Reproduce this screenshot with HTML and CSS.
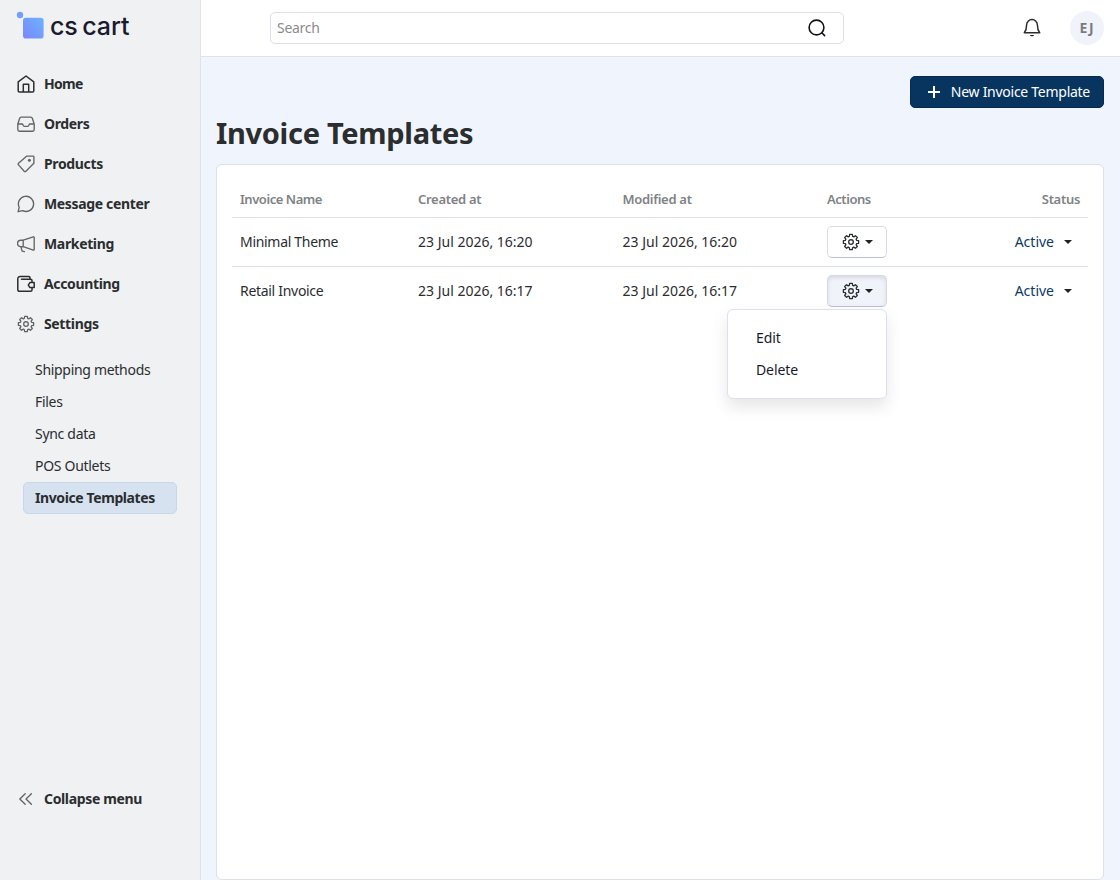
FILE: index.html
```html
<!DOCTYPE html>
<html lang="en">
<head>
    <meta charset="UTF-8">
    <meta name="viewport" content="width=device-width, initial-scale=1.0">
    <title>Invoice Templates</title>
    <link rel="stylesheet" href="styles.css">
</head>
<body>
    <svg class="sprite" width="0" height="0">
        <symbol id="gear" viewBox="-9 -9 18 18">
            <path d="M-1.3-7.6H1.3L1.7-5.6 2.76-5.16 4.45-6.29 6.29-4.45 5.16-2.76 5.6-1.7 7.6-1.3V1.3L5.6 1.7 5.16 2.76 6.29 4.45 4.45 6.29 2.76 5.16 1.7 5.6 1.3 7.6H-1.3L-1.7 5.6-2.76 5.16-4.45 6.29-6.29 4.45-5.16 2.76-5.6 1.7-7.6 1.3V-1.3L-5.6-1.7-5.16-2.76-6.29-4.45-4.45-6.29-2.76-5.16-1.7-5.6Z"/>
            <circle r="2.3"/>
        </symbol>
    </svg>

    <aside class="sidebar">
        <a class="logo" href="#">
            <svg width="28" height="28" viewBox="0 0 28 28">
                <defs>
                    <linearGradient id="logo-fill" x1="1" y1="0" x2="0" y2="1">
                        <stop offset="0" stop-color="#6cb3ff"/>
                        <stop offset="1" stop-color="#7a86fb"/>
                    </linearGradient>
                </defs>
                <circle cx="4" cy="4" r="3.2" fill="#74a0fb"/>
                <rect x="7" y="6.8" width="20.6" height="20.8" rx="2.8" fill="url(#logo-fill)"/>
            </svg>
            <span class="logo-text">cs cart</span>
        </a>
        <nav class="menu">
            <a class="menu-item home" href="#">
                <svg class="icon dark" viewBox="0 0 18 18"><path d="M1.2 6.9 9 1l7.8 5.9v8.8a1.3 1.3 0 0 1-1.3 1.3h-13a1.3 1.3 0 0 1-1.3-1.3ZM6.3 17V9.2h5.4V17"/></svg>
                <span>Home</span>
            </a>
            <a class="menu-item" href="#">
                <svg class="icon" viewBox="0 0 18 18"><path d="M.8 9 2.7 3.2a1.6 1.6 0 0 1 1.500-1.100h9.600a1.6 1.6 0 0 1 1.500 1.100L17.200 9v5.600a1.600 1.600 0 0 1-1.600 1.600H2.400a1.600 1.600 0 0 1-1.600-1.600ZM.8 9h4.400c.8 0 .9 2.400 2 2.400h3.600c1.100 0 1.200-2.400 2-2.400h4.400"/></svg>
                <span>Orders</span>
            </a>
            <a class="menu-item" href="#">
                <svg class="icon" viewBox="0 0 18 18"><path d="M9.8 1.1h6.300a.8.8 0 0 1 .8.8v6.300L8.900 16.200a1.200 1.200 0 0 1-1.700 0L1.500 9.900a1.200 1.200 0 0 1 0-1.600Z"/><circle class="dot" cx="12.4" cy="5.300" r="1.500"/></svg>
                <span>Products</span>
            </a>
            <a class="menu-item" href="#">
                <svg class="icon" viewBox="0 0 18 18"><path d="M1.1 16.700 2.200 12.300A7.600 7.600 0 1 1 5.600 15.700Z"/></svg>
                <span>Message center</span>
            </a>
            <a class="menu-item" href="#">
                <svg class="icon" viewBox="0 0 18 18"><path d="M6.2 5.200 16.300 1.800a.7.7 0 0 1 .9.7v12a.7.7 0 0 1-.9.7L6.200 11.700H3.800a3.250 3.250 0 0 1 0-6.500ZM6.200 5.200v6.500M3.900 11.800l1.200 4.300 2.300.5"/></svg>
                <span>Marketing</span>
            </a>
            <a class="menu-item" href="#">
                <svg class="icon dark" viewBox="0 0 18 18"><path d="M15 7.300V5.600a1.400 1.400 0 0 0-1.400-1.400H4.500M13 4.200V2.800a1.200 1.200 0 0 0-1.200-1.200H3A2.200 2.200 0 0 0 .8 3.800v11a1.500 1.500 0 0 0 1.500 1.500h11.300a1.400 1.400 0 0 0 1.400-1.400v-2.100M17.200 7.600h-4.300l-1.600 2.500 1.600 2.500h4.300Z"/></svg>
                <span>Accounting</span>
            </a>
            <a class="menu-item" href="#">
                <svg class="icon"><use href="#gear"/></svg>
                <span>Settings</span>
            </a>
        </nav>
        <nav class="submenu">
            <a href="#">Shipping methods</a>
            <a href="#">Files</a>
            <a href="#">Sync data</a>
            <a href="#">POS Outlets</a>
            <a href="#" class="active">Invoice Templates</a>
        </nav>
        <a class="menu-item collapse" href="#">
            <svg class="icon" viewBox="0 0 18 18"><path d="M8.200 3.700 2.800 9l5.400 5.300M14.400 3.700 9 9l5.400 5.300"/></svg>
            <span>Collapse menu</span>
        </a>
    </aside>

    <div class="main">
        <header class="topbar">
            <div class="search">
                <span>Search</span>
                <svg width="18" height="18" viewBox="0 0 18 18"><circle cx="8.500" cy="8.500" r="7.400"/><path d="m13.800 13.800 2.800 2.800"/></svg>
            </div>
            <div class="account">
                <svg class="bell" width="18" height="20" viewBox="0 0 18 20"><path d="M3.600 7a5.400 5.400 0 0 1 10.800 0c0 4.600 1 6.200 2.300 7.800H1.300C2.600 13.200 3.600 11.600 3.600 7Z"/><path class="clapper" d="M6.800 17h4.400c-.5 1.700-3.900 1.700-4.400 0Z"/></svg>
                <span class="avatar">EJ</span>
            </div>
        </header>

        <div class="content">
            <div class="actions-bar">
                <button class="btn-primary">
                    <svg width="12" height="12" viewBox="0 0 12 12"><path d="M6 0v12M0 6h12"/></svg>
                    <span>New Invoice Template</span>
                </button>
            </div>
            <h1>Invoice Templates</h1>
            <div class="card">
                <div class="row head">
                    <span>Invoice Name</span>
                    <span class="date">Created at</span>
                    <span class="date">Modified at</span>
                    <span>Actions</span>
                    <span class="status">Status</span>
                </div>
                <div class="row">
                    <span>Minimal Theme</span>
                    <span class="date">23 Jul 2026, 16:20</span>
                    <span class="date">23 Jul 2026, 16:20</span>
                    <div class="tools">
                        <button class="btn-tool"><svg class="icon"><use href="#gear"/></svg><i class="caret"></i></button>
                    </div>
                    <a class="status" href="#"><span>Active</span><i class="caret"></i></a>
                </div>
                <div class="row">
                    <span>Retail Invoice</span>
                    <span class="date">23 Jul 2026, 16:17</span>
                    <span class="date">23 Jul 2026, 16:17</span>
                    <div class="tools">
                        <button class="btn-tool open"><svg class="icon"><use href="#gear"/></svg><i class="caret"></i></button>
                        <div class="dropdown">
                            <a href="#">Edit</a>
                            <a href="#">Delete</a>
                        </div>
                    </div>
                    <a class="status" href="#"><span>Active</span><i class="caret"></i></a>
                </div>
            </div>
        </div>
    </div>
</body>
</html>
```
FILE: styles.css
```css
* {
    box-sizing: border-box;
}
body {
    margin: 0;
    height: 880px;
    display: flex;
    overflow: hidden;
    font-family: "Noto Sans", "Open Sans", sans-serif;
    font-size: 14px;
    line-height: 20px;
    letter-spacing: -0.3px;
    color: #2b2d2f;
    background-color: #f0f4fc;
}
a {
    color: inherit;
    text-decoration: none;
}
button {
    font: inherit;
    letter-spacing: inherit;
    cursor: pointer;
}
svg {
    fill: none;
    stroke: currentColor;
    flex-shrink: 0;
}
.sprite {
    position: absolute;
}
.sidebar {
    width: 201px;
    flex-shrink: 0;
    background-color: #eff1f3;
    border-right: 1px solid #dce3ea;
    display: flex;
    flex-direction: column;
}
.logo {
    height: 64px;
    padding: 11px 16px 0;
    display: flex;
    align-items: flex-start;
    gap: 6px;
}
.logo svg {
    stroke: none;
}
.logo-text {
    font-family: Inter, sans-serif;
    font-size: 25px;
    font-weight: 500;
    line-height: 30px;
    letter-spacing: -0.1px;
    word-spacing: -2px;
    color: #1a1a2e;
}
.menu-item {
    height: 40px;
    padding-left: 17px;
    display: flex;
    align-items: center;
    gap: 9px;
    font-weight: 700;
    letter-spacing: -0.35px;
}
.menu-item.home {
    letter-spacing: -0.7px;
}
.icon {
    width: 18px;
    height: 18px;
    stroke-width: 1.35;
    stroke-linejoin: round;
    stroke-linecap: round;
    color: #626467;
}
.icon.dark {
    color: #2b2d30;
    stroke-width: 1.5;
}
.icon .dot {
    fill: currentColor;
    stroke: none;
}
.submenu {
    padding: 10px 23px 0;
}
.submenu a {
    display: block;
    height: 32px;
    padding: 5px 11px;
    border: 1px solid transparent;
    border-radius: 5px;
}
.submenu .active {
    font-weight: 700;
    background-color: #d6e2f0;
    border-color: #c8d8ea;
    letter-spacing: -0.4px;
}
.collapse {
    margin-top: auto;
    margin-bottom: 61px;
}
.main {
    flex: 1;
    display: flex;
    flex-direction: column;
}
.topbar {
    height: 57px;
    flex-shrink: 0;
    padding: 0 16px 0 69px;
    background-color: #fff;
    border-bottom: 1px solid #dfe2ea;
    display: flex;
    align-items: center;
    justify-content: space-between;
}
.search {
    width: 574px;
    height: 32px;
    padding: 0 17px 0 6px;
    border: 1px solid #dcdfe9;
    border-radius: 5px;
    color: #8c8c8c;
    display: flex;
    align-items: center;
    justify-content: space-between;
}
.search svg {
    color: #111;
    stroke-width: 1.6;
    stroke-linecap: round;
}
.account {
    display: flex;
    align-items: center;
    gap: 29px;
}
.bell {
    stroke-width: 1.5;
    stroke-linejoin: round;
}
.bell .clapper {
    fill: currentColor;
    stroke: none;
}
.avatar {
    width: 34px;
    height: 34px;
    border-radius: 50%;
    background-color: #f1f3fa;
    color: #7b7b7e;
    font-size: 14px;
    font-weight: 700;
    letter-spacing: 0.8px;
    line-height: 34px;
    text-align: center;
}
.content {
    flex: 1;
    padding: 19px 16px 0 15px;
    display: flex;
    flex-direction: column;
}
.actions-bar {
    display: flex;
    justify-content: flex-end;
}
.btn-primary {
    width: 194px;
    height: 32px;
    padding: 0 13px 0 17px;
    border: 1px solid #042b54;
    border-radius: 5px;
    background-color: #08355f;
    color: #fff;
    letter-spacing: -0.27px;
    display: flex;
    align-items: center;
    justify-content: space-between;
    white-space: nowrap;
}
.btn-primary svg {
    stroke-width: 2;
}
h1 {
    margin: 5px 0 11px;
    font-size: 29px;
    line-height: 40px;
    font-weight: 700;
    letter-spacing: -0.3px;
}
.card {
    flex: 1;
    padding: 16px 15px;
    background-color: #fff;
    border: 1px solid #dce1e8;
    border-radius: 6px;
}
.row {
    height: 49px;
    display: grid;
    grid-template-columns: 178px 204.5px 204.5px 120px 1fr;
    align-items: center;
}
.row > * {
    padding: 0 8px;
}
.row + .row {
    border-top: 1px solid #dce1ea;
}
.row .date {
    letter-spacing: 0;
}
.row.head {
    height: 36px;
    font-size: 13px;
    font-weight: 600;
    letter-spacing: -0.45px;
    color: #808285;
}
.row.head .date {
    letter-spacing: -0.3px;
}
.row.head .status {
    display: block;
    color: inherit;
    text-align: right;
    letter-spacing: -0.3px;
}
.status {
    display: flex;
    align-items: center;
    justify-content: flex-end;
    gap: 10px;
    color: #0b3a66;
    letter-spacing: 0;
}
a.status {
    padding-right: 16px;
}
.caret {
    border: 4px solid transparent;
    border-top-color: #222;
    border-bottom: 0;
}
.tools {
    position: relative;
}
.btn-tool {
    width: 60px;
    height: 32px;
    padding: 0 0 0 1px;
    border: 1px solid #d8dce8;
    border-bottom-color: #b9bfd4;
    border-radius: 5px;
    background-color: #fff;
    display: flex;
    align-items: center;
    justify-content: center;
    gap: 5px;
}
.btn-tool .icon {
    color: #2b2d30;
}
.btn-tool.open {
    background-color: #f0f3fa;
    border-color: #d4d8e6;
    border-bottom-color: #b9bfd4;
    box-shadow: inset 0 2px 4px rgba(0, 0, 0, 0.1);
}
.dropdown {
    position: absolute;
    top: 34px;
    left: -92px;
    width: 160px;
    height: 90px;
    padding: 12px 0;
    background-color: #fff;
    border: 1px solid #dce1ea;
    border-radius: 6px;
    box-shadow: 0 8px 16px rgba(0, 0, 0, 0.1);
}
.dropdown a {
    display: block;
    padding: 6px 28px;
    color: #1a1a2e;
    letter-spacing: -0.1px;
}
```
